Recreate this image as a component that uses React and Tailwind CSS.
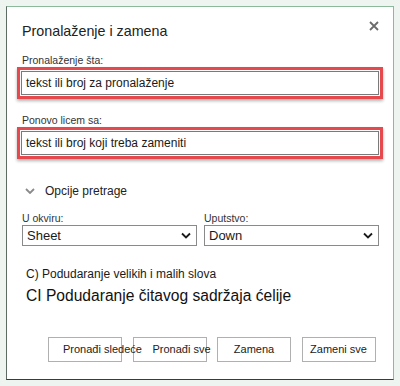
import React from "react";

const Chevron = ({ className }) => (
  <svg viewBox="0 0 10 6" className={className} fill="none">
    <path d="M1 1l4 4 4-4" stroke="currentColor" strokeWidth="1.8" />
  </svg>
);

const SelectBox = ({ value }) => (
  <div className="w-[175px] h-[21px] border border-[#8a8a8a] bg-white flex items-center justify-between pl-[4px] pr-[5px]">
    <span className="text-[13px] leading-none text-[#1a1a1a]">{value}</span>
    <Chevron className="w-[10px] h-[7px] text-[#1a1a1a]" />
  </div>
);

const RedField = ({ text }) => (
  <div className="-ml-[5px] w-[366px] h-[32px] border-[3px] border-[#e5484d] p-[1px] bg-white shadow-[0_2px_3px_rgba(0,0,0,0.3)]">
    <div className="h-full border border-[#7a7a7a] flex items-center pl-[4px] text-[12px] text-[#1a1a1a]">
      {text}
    </div>
  </div>
);

export default function App() {
  const buttons = [
    { label: "Pronađi sledeće", cls: "justify-start pl-[14px] relative z-10" },
    { label: "Pronađi sve", cls: "justify-start pl-[19px]" },
    { label: "Zamena", cls: "justify-center" },
    { label: "Zameni sve", cls: "justify-center" },
  ];

  return (
    <div className="w-[400px] h-[386px] bg-[#eef5f0] p-[6px] font-['Liberation_Sans',Arial,sans-serif]">
      <div className="w-[388px] h-[374px] bg-white border border-t-[#8cb99a] border-r-[#8cb99a] border-l-[#5d6b62] border-b-[#3a3a3a] pt-[15px] pl-[15px] flex flex-col relative">
        <button className="absolute right-[14px] top-[14px] text-[#6b6b6b]">
          <svg viewBox="0 0 10 10" className="w-[10px] h-[10px]">
            <path d="M1 1l8 8M9 1l-8 8" stroke="currentColor" strokeWidth="1.8" />
          </svg>
        </button>

        <div className="h-[20px] flex items-center text-[14.3px] text-[#222]">
          Pronalaženje i zamena
        </div>

        <div className="mt-[12px] h-[13px] flex items-center text-[10.5px] text-[#333]">
          Pronalaženje šta:
        </div>
        <RedField text="tekst ili broj za pronalaženje" />

        <div className="mt-[15px] h-[13px] flex items-center text-[10.5px] text-[#333]">
          Ponovo licem sa:
        </div>
        <RedField text="tekst ili broj koji treba zameniti" />

        <div className="mt-[23px] h-[18px] flex items-center gap-[10px] pl-[3px]">
          <Chevron className="w-[10px] h-[6px] text-[#8a8a8a]" />
          <span className="text-[12px] text-[#222]">Opcije pretrage</span>
        </div>

        <div className="mt-[13px] flex gap-[7px]">
          <div className="flex flex-col">
            <div className="h-[12px] flex items-center text-[10.5px] text-[#333]">U okviru:</div>
            <SelectBox value="Sheet" />
          </div>
          <div className="flex flex-col">
            <div className="h-[12px] flex items-center text-[10.5px] text-[#333]">Uputstvo:</div>
            <SelectBox value="Down" />
          </div>
        </div>

        <div className="mt-[21px] h-[14px] flex items-center pl-[4px] text-[12px] text-[#1a1a1a]">
          C) Podudaranje velikih i malih slova
        </div>
        <div className="mt-[5px] h-[20px] flex items-center pl-[4px] text-[15.6px] text-[#111]">
          CI Podudaranje čitavog sadržaja ćelije
        </div>

        <div className="mt-[31px] ml-[26px] flex gap-[10.5px]">
          {buttons.map((b) => (
            <button
              key={b.label}
              className={`w-[74px] h-[25px] border border-[#b0b0b0] flex items-center whitespace-nowrap text-[11px] text-[#222] ${b.cls}`}
            >
              {b.label}
            </button>
          ))}
        </div>
      </div>
    </div>
  );
}
